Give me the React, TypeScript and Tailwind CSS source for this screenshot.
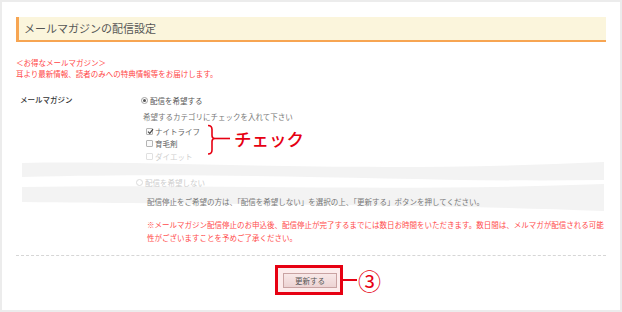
const CATEGORY_OPTIONS: { label: string; checked: boolean; faded?: boolean }[] = [
  { label: 'ナイトライフ', checked: true },
  { label: '育毛剤', checked: false },
  { label: 'ダイエット', checked: false, faded: true },
]

function CheckBox({ checked, faded }: { checked: boolean; faded?: boolean }) {
  return (
    <span
      className={`relative flex h-[7px] w-[7px] items-center justify-center rounded-[1px] border ${
        faded ? 'border-[#e0e0e0] bg-white' : 'border-[#b4b4b4] bg-[#fafafa]'
      }`}
    >
      {checked && (
        <svg width="7" height="7" viewBox="0 0 7 7" className="absolute left-[0px] top-[-1px]">
          <path d="M1 3.6 L2.8 5.4 L6 1.2" fill="none" stroke="#444" strokeWidth="1.2" />
        </svg>
      )}
    </span>
  )
}

function Radio({ selected, faded }: { selected: boolean; faded?: boolean }) {
  return (
    <span
      className={`flex h-[7px] w-[7px] items-center justify-center rounded-full border bg-white ${
        faded ? 'border-[#dadada]' : 'border-[#a0a0a0]'
      }`}
    >
      {selected && <span className="h-[3px] w-[3px] rounded-full bg-[#555]" />}
    </span>
  )
}

export default function App() {
  return (
    <div className="h-[312px] w-[622px] border-2 border-[#ececec] bg-white font-['Noto_Sans_CJK_JP','Noto_Sans',sans-serif]">
      {/* 見出し */}
      <div className="mx-[14px] mt-[15px] flex h-[25px] items-center border-b-2 border-l-[3px] border-[#f7a552] bg-[#fbf5dc] pl-[5px]">
        <h1 className="text-[11px] leading-none text-[#555]">メールマガジンの配信設定</h1>
      </div>

      <div className="ml-[14px] mt-[15px] text-[7.5px] leading-[11px] text-[#ff4646]">
        <p>＜お得なメールマガジン＞</p>
        <p>耳より最新情報、読者のみへの特典情報等をお届けします。</p>
      </div>

      {/* 配信設定フォーム */}
      <div className="relative mt-[15px] flex">
        <svg
          width="590"
          height="60"
          viewBox="0 0 590 60"
          className="absolute left-[16px] top-[65px] z-0"
        >
          <path d="M4 4 C 150 1 330 15 586 3 L586 21 C 400 24 250 12 4 18 Z" fill="#f3f3f3" />
          <path d="M4 28 C 180 25 380 33 586 25 L586 52 C 400 45 250 46 4 43 Z" fill="#f3f3f3" />
        </svg>

        <div className="relative z-10 ml-[18px] w-[116px] text-[7.5px] font-medium leading-[11px] text-[#333]">
          メールマガジン
        </div>

        <div className="relative z-10 flex flex-col pt-[1px] text-[7.5px] leading-[11px]">
          <label className="ml-[5px] flex items-center gap-[2px] text-[#555]">
            <Radio selected />
            <span>配信を希望する</span>
          </label>

          <p className="ml-[7px] mt-[5px] text-[#777]">希望するカテゴリにチェックを入れて下さい</p>

          <div className="mt-[3px] flex items-start">
            <div className="ml-[10px] flex w-[61px] flex-col">
              {CATEGORY_OPTIONS.map((option) => (
                <label
                  key={option.label}
                  className={`flex h-[12.5px] items-center gap-[2px] ${
                    option.faded ? 'text-[#cfcfcf]' : 'text-[#666]'
                  }`}
                >
                  <CheckBox checked={option.checked} faded={option.faded} />
                  <span>{option.label}</span>
                </label>
              ))}
            </div>

            <div className="-mt-[1px] flex items-center">
              <svg width="24" height="32" viewBox="0 0 24 32">
                <path
                  d="M1 1.5 Q5 1.5 5 5.5 L5 11.5 Q5 14.5 8 14.5 Q5 14.5 5 17.5 L5 26 Q5 30 1 30"
                  fill="none"
                  stroke="#e60012"
                  strokeWidth="1.6"
                />
                <path d="M8 14.5 L23 14.5" stroke="#e60012" strokeWidth="1.6" />
              </svg>
              <span className="-mt-[3px] ml-[3px] text-[17.5px] font-medium leading-none text-[#e60012]">
                チェック
              </span>
            </div>
          </div>

          <label className="mt-[14px] flex items-center gap-[2px] text-[#cdcdcd]">
            <Radio selected={false} faded />
            <span>配信を希望しない</span>
          </label>

          <p className="ml-[11px] mt-[8px] text-[#777]">
            配信停止をご希望の方は、「配信を希望しない」を選択の上、「更新する」ボタンを押してください。
          </p>

          <p className="ml-[11px] mt-[11px] w-[460px] leading-[13px] text-[#ff4b4b]">
            ※メールマガジン配信停止のお申込後、配信停止が完了するまでには数日お時間をいただきます。数日間は、メルマガが配信される可能性がございますことを予めご了承ください。
          </p>
        </div>
      </div>

      <div className="mx-[14px] mt-[11px] border-t border-dashed border-[#d6d6d6]" />

      {/* 更新ボタン */}
      <div className="mt-[9px] flex justify-center pr-[4px]">
        <div className="relative">
          <div className="flex h-[30px] w-[68px] items-center justify-center border-[3px] border-[#e60012] bg-[#fcecec] pl-[2px] pt-[2px]">
            <button
              type="button"
              className="flex h-[15px] w-[54px] items-center justify-center border border-[#c9a3a3] bg-gradient-to-b from-[#f8e8e8] to-[#ecd3d3] text-[7.5px] leading-none text-[#555]"
            >
              更新する
            </button>
          </div>
          <div className="absolute left-[68px] top-[3px] flex items-center">
            <span className="h-[2px] w-[14px] bg-[#e60012]" />
            <span className="ml-[1px] text-[23px] leading-[24px] text-[#e60012]">③</span>
          </div>
        </div>
      </div>
    </div>
  )
}
